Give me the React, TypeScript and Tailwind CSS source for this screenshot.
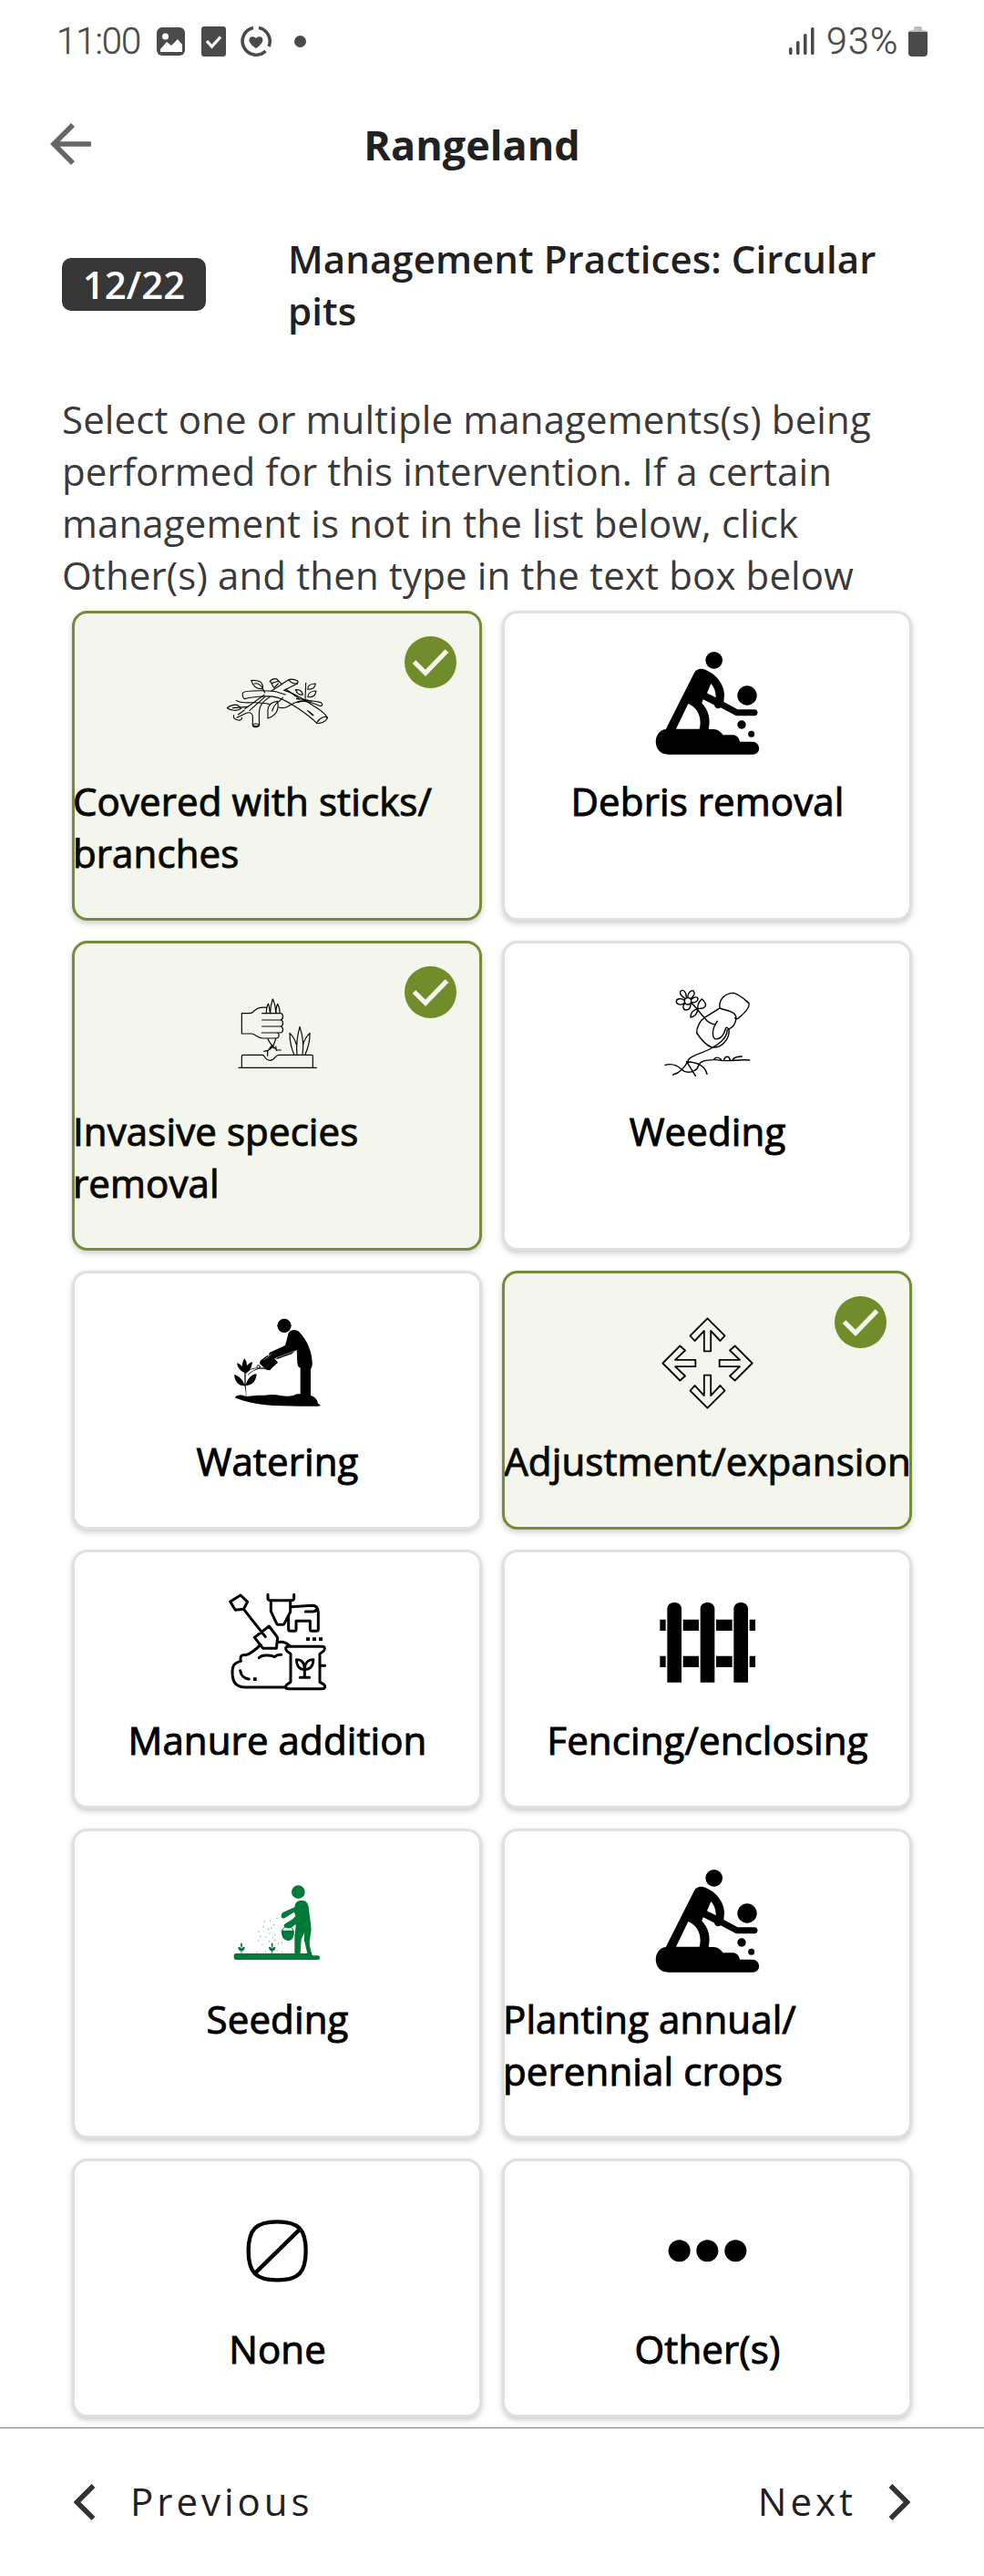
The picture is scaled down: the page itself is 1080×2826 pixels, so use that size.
import React from "react";

const Frame = ({ children, fill = "none", vb = "0 0 480 390" }: { children: React.ReactNode; fill?: string; vb?: string }) => (
  <svg className="h-[130px] w-[160px] shrink-0" viewBox={vb} fill={fill} strokeLinecap="round" strokeLinejoin="round">{children}</svg>
);

const Branches = () => (
  <Frame vb="462 135 480 390">
    <g stroke="#080a02" strokeWidth="3.4">
      <path d="M590 300c6-8 100-10 120 0M590 300c-3 6 0 18 5 20 14-4 76-14 110-4 34 10 102 58 128 84M710 300l20 6" />
      <path d="M596 353l64-46M612 358l50-44M684 294l56-37c10-4 22 0 31 5l-2 8-44 22c40 10 70 34 99 52 18 12 38 22 44 40" />
      <path d="M741 257c4 9 18 15 29 12M678 264c4-9 20-13 25-8M682 264l8 17M684 270c6-6 14-6 24-8M692 284l14-14M704 258l14 14M734 290l42 30" />
      <path d="M868 383c0-8-24-4-34 14-4 8 28 2 34-14zM803 359l16 15M808 362l14 12" />
      <path d="M617 260c8-2 30 0 34 8 6 8 4 14 4 18-18 4-30-4-38-26zM628 270c8-2 18 2 26 14l8 16" />
      <path d="M538 350c8-8 28-14 36-8l10 10c-14 10-34 6-46-2zM556 350l50-4" />
      <path d="M568 325c20 16 64 0 108 12M574 372l20-14M560 374c-4 8 4 14 14 16 8 2 14-4 12-8M570 382l28-14c12-6 22-2 24 8v30c0 10 20 10 22-2-2-38-4-60 18-78l16-12" />
      <ellipse cx="633" cy="406" rx="11" ry="4" />
      <path d="M704 328c-20 2-30 14-32 26v30c24-8 38-26 32-56zM686 360c4-12 10-22 18-28s12-10 17-16" />
      <path d="M708 348c24 8 36-10 54-16 24-10 62-6 84 0 8 4 6 10 0 12-22-10-54-22-76-12" />
      <path d="M763 290c10 0 20 0 24 16-12 2-18-2-24-16zM797 268l-2 52M803 288c0-12 10-18 26-18-2 14-10 20-26 18zM804 314c0-12 10-20 27-20-2 16-12 22-27 20zM766 320c20 2 40 2 48 8" />
    </g>
  </Frame>
);

const Digger = () => (
  <Frame vb="468 135 480 390" fill="#000">
    <circle cx="731" cy="193" r="28" />
    <circle cx="840" cy="309" r="32" />
    <circle cx="822" cy="405" r="14" />
    <circle cx="854" cy="436" r="10.5" />
    <path fillRule="evenodd" d="M572 421L665 236c6-12 18-16 30-14 42 12 70 52 70 84l-2 24 46 25h55c14 0 14 21 0 21h-60l-51-27c-10 6-18 2-22-9l-36-18-4 12c20 22 30 48 22 86h19c14 2 22 10 29 19h30c14 0 22 8 25 22h44c26 4 26 42-1 42H580c-54 0-52-78-8-83zM606 419h77c10-38-8-72-37-83zM708 301l29 15c0-18-4-32-16-46z" />
  </Frame>
);

const Invasive = () => (
  <Frame vb="462 141 480 390">
    <g stroke="#080a02" strokeWidth="3.6">
      <path d="M668 256c-30-2-32 4-42 12-4 5-8 7-16 7h-24v67h31c14 0 20 15 38 15h44c10 0 14-16 2-18h-49M653 275h61c10 2 10 20 0 22h-61M714 297c10 2 10 19 0 21h-61M714 318c10 2 10 19 0 21h-13" />
      <path d="M667 275c0-12 2-24 6-31 4 6 5 16 6 30M680 275c0-20 4-36 8-47 6 12 10 26 10 47M699 274c0-12 2-24 5-30 5 10 8 20 7 30" />
      <path d="M672 359c6 16 18 26 29 37M698 359c-6 16-6 28-26 38l-13 3M684 382l-13 18v15M690 378v12M698 384l2 13M700 396h15" />
      <path d="M576 454h256M586 454v-38c0-2 1-4 4-4h64c8 0 8 18 25 18s17-18 29-18h108c3 0 4 2 4 4v38" />
      <path d="M768 411c-4-36 2-66 9-92 9 26 14 56 9 92M758 410c-10-22-14-44-14-70 10 10 18 22 22 38M795 410c10-22 16-44 15-70-10 10-18 22-22 38" />
    </g>
  </Frame>
);

const Weeding = () => (
  <Frame vb="468 141 480 390">
    <g stroke="#000" strokeWidth="4.2">
      <circle cx="645" cy="235" r="11" />
      <path d="M634 232c-10-8-26-6-27 3-1 10 16 16 27 6M636 226c-14-8-20-18-14-25 8-6 18 4 18 21M645 222c-2-14 12-26 19-20 6 8-2 20-10 24M656 230c10-12 22-10 22-2 0 8-12 14-22 10M634 244c-8 8-4 20 4 20 12 0 16-10 16-19" />
      <path d="M656 241c20 16 28 34 43 48M678 260c-2-12 4-24 13-32 20 18 16 32-13 32zM678 260c-16 4-24 16-24 28 14-2 22-14 24-28z" />
      <path d="M750 258c-4-30 18-50 46-50 22 6 38 24 50 34 4 16-26 42-36 50-4 2-8 0-10-2M750 258c26 10 54 10 54 34-2 14-10 28-22 34M748 259l-48 30c-14 8-26 32-26 50 14 22 28 40 50 48 30 4 60-26 56-60M700 290c8 14 20 18 36 23M742 301c-14 16-18 40-12 54 6 10 24 2 30-8 8-12 8-20 10-24 4-4 6 0 10 8M774 330c2 28-36 52-52 60-26 16-64 22-74 36-10 22-24 44-52 51" />
      <path d="M570 445c30-8 46 6 56 16 14 14 48 8 54-14 8-22 36-16 56-20 36 10 76-2 112 2M641 434l29 47M643 435c30 0 58 12 65 40M730 427c6-10 16-8 24 0M764 428c4-14 18-14 20 2M793 427c6-10 20-10 30-10" />
    </g>
  </Frame>
);

const Watering = () => (
  <Frame vb="462 132 480 390" fill="#000">
    <circle cx="726" cy="208" r="23" />
    <path d="M738 240c2-20 28-24 40-8 26 28 42 70 40 106-2 6-2 10-5 12v88c14 4 22 14 24 26 12 6 10 9-2 9-90 0-200 4-272-28 8-12 24-8 34-5h2c2-14-2-26-4-34-22 0-32-16-34-37 20 6 30 20 34 34v-40c-14-6-22-16-25-32 8 2 14 6 17 12 0-12 4-20 8-27 6 8 8 14 8 24 6-8 10-10 18-13-2 18-8 32-22 36v40c6-20 20-36 36-36-2 24-14 38-36 38 2 16 2 26 2 36 28-5 54-2 80-6 32-2 56 14 86-2h12v-86c-12-4-10-18-12-60l-16 14-50 18-8-6 2 4 10 12-28 26-10-2-22-20 2-10 22-16h6l2-10 52-24z" />
    <path d="M600 365c12-16 26-22 80-14M606 370c14-14 40-30 74-18" fill="none" stroke="#000" strokeWidth="2.5" />
    <circle cx="641" cy="343" r="5" fill="#fff" stroke="#000" strokeWidth="3" />
    <path d="M660 320l24-18M700 314l62-23M700 314l8 15" stroke="#fff" strokeWidth="1.5" />
  </Frame>
);

const arrow = "M709.500 184l57 57-15 17-31-33v67h-22v-67l-31 33-15-17z";
const Expand = () => (
  <Frame vb="468 132 480 390">
    <g stroke="#080a02" strokeWidth="5.5">
      <path d={arrow} />
      <path d={arrow} transform="rotate(90 709.5 331.5)" />
      <path d={arrow} transform="rotate(180 709.5 331.5)" />
      <path d={arrow} transform="rotate(270 709.5 331.5)" />
    </g>
  </Frame>
);

const Manure = () => (
  <Frame>
    <g stroke="#000" strokeWidth="9">
      <path d="M86 66l34-21 23 22-13 24-27 3zM131 92l71 90M166 184l48-37 28 37-4 36h-44z" />
      <path d="M210 43v12q0 7 7 7h72q7 0 7-7V43M220 64v34l19 41q1 3 4 3h17q3 0 4-3l20-39V64M288 83l68-4q20 0 20 24v54q0 6-5 6h-17q-5 0-5-6v-27h-46v27q0 6-5 6h-15q-5 0-5-6v-46M334 99h22q14 0 16-10" />
      <path d="M186 208c-14 14-30 28-48 34-16-2-20 4-17 20-22 6-28 14-28 38 0 30 12 48 42 48h134M242 200c18-4 28 0 40 12" />
      <path d="M181 251c8-8 16-9 25-8 10-1 18 0 26 5 8-8 14-8 22-7M119 293c2 16 14 27 29 28" />
      <path d="M277 214h112c10 0 10 10 4 15l-12 9v93l12 7c8 6 6 15-4 15H277c-10 0-10-9-4-14l12-8v-93l-12-9c-6-6-6-15 4-15zM383 277h15M316 316h31M331 316v-28" />
      <path d="M331 290c-18 0-26-12-27-33 18 0 27 12 27 33 0-20 10-33 29-33-1 21-11 33-29 33z" strokeWidth="8" />
    </g>
    <path d="M162 316h11v11h-11zM336 184h12v11h-12zM357 184h12v11h-12zM378 184h12v11h-12z" fill="#000" />
  </Frame>
);

const Fence = () => (
  <Frame fill="#000">
    {[109, 218, 328].map((x) => <path key={x} d={`M${x} 332V90c0-28 47-28 47 0v242z`} />)}
    {[125, 245].map((y) => <path key={y} d={`M85 ${y}h19v37H85zM161 ${y}h52v37h-52zM270 ${y}h53v37h-53zM380 ${y}h19v37h-19z`} />)}
  </Frame>
);

const Seeding = () => (
  <Frame fill="#007a38">
    <circle cx="310" cy="104" r="22" />
    <path d="M98 313q0-7 7-7h193v-50c0-16 4-28 4-46l-16 12c-10 4-28-2-22-12l26-16 11-10-4-14-32 20c-14 4-14-14-4-20l37-16c2-14 6-22 24-22 14 0 20 8 22 22l7 52 2 22-6 40c0 18 6 34 10 45h16q8 0 8 7t-8 7H105q-7 0-7-7z" />
    <path d="M317 306l3-46 10-22v26l10 42z" fill="#fff" />
    <path d="M254 230h42c2 18-4 32-18 34-16 0-24-14-24-34z" />
    <path d="M257 230c6-18 32-18 36 0M123 304v-14M224 304v-14" fill="none" stroke="#007a38" strokeWidth="3" />
    {[123, 224].map((x) => <path key={x} transform={`translate(${x} 0)`} d="M0 270q6 8 0 18-6-10 0-18zM-11 284q10 0 11 8 1-8 11-8 0 14-11 14t-11-14z" />)}
    {[[200, 201], [218, 198], [240, 190], [195, 218], [212, 226], [229, 212], [180, 234], [216, 240], [232, 246], [179, 264], [192, 276], [204, 252], [214, 266], [234, 262], [226, 254], [244, 274], [184, 250], [256, 270], [174, 302], [256, 302], [240, 296], [202, 300], [221, 222]].map(([x, y]) => <circle key={`${x}-${y}`} cx={x} cy={y} r="1.6" />)}
  </Frame>
);

const NoneIcon = () => (
  <Frame>
    <path d="M241 103c70 0 94 25 94 96s-24 96-94 96-95-25-95-96 25-96 95-96zM169 271L316 127" stroke="#000" strokeWidth="13" />
  </Frame>
);

const Dots = () => (
  <Frame fill="#000">
    <circle cx="149" cy="199" r="36" /><circle cx="241" cy="199" r="36" /><circle cx="334" cy="199" r="36" />
  </Frame>
);

type Option = { label: React.ReactNode; icon: React.ReactNode; tall?: boolean; on?: boolean; multi?: boolean };

const options: Option[] = [
  { label: <>Covered with sticks/<br />branches</>, icon: <Branches />, tall: true, on: true, multi: true },
  { label: "Debris removal", icon: <Digger />, tall: true },
  { label: <>Invasive species<br />removal</>, icon: <Invasive />, tall: true, on: true, multi: true },
  { label: "Weeding", icon: <Weeding />, tall: true },
  { label: "Watering", icon: <Watering /> },
  { label: "Adjustment/expansion", icon: <Expand />, on: true },
  { label: "Manure addition", icon: <Manure /> },
  { label: "Fencing/enclosing", icon: <Fence /> },
  { label: "Seeding", icon: <Seeding />, tall: true },
  { label: <>Planting annual/<br />perennial crops</>, icon: <Digger />, tall: true, multi: true },
  { label: "None", icon: <NoneIcon /> },
  { label: "Other(s)", icon: <Dots /> },
];

const Card = ({ label, icon, tall, on, multi }: Option) => (
  <button
    type="button"
    aria-pressed={!!on}
    className={`relative flex w-[450px] flex-col items-center overflow-hidden rounded-[17px] border-[3px] pt-8 shadow-[0_3px_6px_rgba(0,0,0,0.2)] ${tall ? "h-[340px]" : "h-[284px]"} ${on ? "border-[#748b37] bg-[#f4f5ec]" : "border-[#e0e0e0] bg-white"}`}
  >
    {icon}
    <span className={`mt-[15px] -mx-[3px] block w-[450px] pl-px text-[42px] leading-[57px] tracking-[0.12px] whitespace-nowrap [-webkit-text-stroke:1px_currentColor] ${on ? "text-[#080a02]" : "text-black"} ${multi ? "text-left" : "text-center"}`}>{label}</span>
    {on && (
      <svg className="absolute top-[25px] right-[25px] size-[57px]" viewBox="0 0 57 57">
        <circle cx="28.5" cy="28.5" r="28.5" fill="#718c2b" />
        <path d="M10.5 28L23 40.3L46.5 16" fill="none" stroke="#f4f5ec" strokeWidth="5.2" />
      </svg>
    )}
  </button>
);

export default function App() {
  return (
    <div className="flex h-[2826px] w-[1080px] flex-col overflow-hidden bg-white font-['Open_Sans',sans-serif] text-[42px] leading-[57px] text-[#212121]">
      <div className="flex h-[90px] shrink-0 items-center pl-[62px] pr-[62px] font-['Roboto',sans-serif] text-[40px] leading-none font-light text-[#4a4a4a]">
        <span className="w-[110px] pt-px tracking-[-1px] [-webkit-text-stroke:0.4px_currentColor]">11:00</span>
        <svg className="size-[31px]" viewBox="0 0 31 31">
          <rect width="31" height="31" rx="6" fill="#4a4a4a" />
          <circle cx="9.5" cy="10" r="3.5" fill="#fff" />
          <path d="M4 27v-3l7-8 5 4 7-7 5 6v8z" fill="#fff" />
        </svg>
        <svg className="ml-[18px] h-[33px] w-[27px]" viewBox="0 0 27 33">
          <rect width="27" height="33" rx="3" fill="#4a4a4a" />
          <path d="M6 16l5.5 6L21 11.500" fill="none" stroke="#fff" strokeWidth="3.2" />
        </svg>
        <svg className="ml-[16px] size-[34px]" viewBox="0 0 34 34" fill="none">
          <path d="M20 2.500A15 15 0 0 1 31 23M27.500 28A15 15 0 1 1 14 2.500" stroke="#4a4a4a" strokeWidth="3.600" />
          <path d="M17 25c-14-9-5-16 0-11 5-5 14 2 0 11z" fill="#4a4a4a" />
        </svg>
        <span className="ml-[25px] size-[13px] rounded-full bg-[#4a4a4a]" />
        <svg className="ml-auto h-[30px] w-[29px]" viewBox="0 0 29 30" fill="#4a4a4a">
          <rect x="0" y="22" width="3.500" height="8" rx="1.500" /><rect x="8" y="15" width="3.500" height="15" rx="1.500" /><rect x="16" y="7" width="3.500" height="23" rx="1.500" /><rect x="24" y="0" width="3.500" height="30" rx="1.500" />
        </svg>
        <span className="ml-[12px] w-[86px] pt-px text-[41px] tracking-[1.2px] whitespace-nowrap [-webkit-text-stroke:0.4px_currentColor]">93%</span>
        <svg className="ml-[4px] h-[33px] w-[21px]" viewBox="0 0 21 33">
          <path d="M0 8q0-4 4-4h2V2q0-2 2-2h5q2 0 2 2v2h2q4 0 4 4z" fill="#bdbdbd" />
          <path d="M0 6h21v23q0 4-4 4H4q-4 0-4-4z" fill="#4a4a4a" />
        </svg>
      </div>

      <header className="grid h-[136px] shrink-0 grid-cols-[200px_1fr_244px] items-center">
        <svg className="ml-[55px] size-[46px]" viewBox="0 0 46 46" fill="none" stroke="#666" strokeWidth="5.600">
          <path d="M45 23H5M25 2L4 23l21 21" />
        </svg>
        <h1 className="text-center text-[45px] font-bold">Rangeland</h1>
      </header>

      <div className="flex h-[171px] shrink-0 items-center pl-[68px]">
        <div className="flex h-[58px] w-[158px] items-center justify-center rounded-[10px] bg-[#373737] pb-px font-semibold text-white">12/22</div>
        <h2 className="ml-[90px] w-[680px] font-semibold tracking-[0.06px]">Management Practices: Circular<br />pits</h2>
      </div>

      <p className="mt-[34px] pl-[68px] tracking-[0.13px] whitespace-nowrap text-[#3a3a3a]">
        Select one or multiple managements(s) being<br />performed for this intervention. If a certain<br />management is not in the list below, click<br />Other(s) and then type in the text box below
      </p>

      <div className="mt-[11px] ml-[79px] grid w-[922px] shrink-0 grid-cols-2 gap-[22px]">
        {options.map((o, i) => <Card key={i} {...o} />)}
      </div>

      <footer className="mt-[11px] flex h-[163px] shrink-0 items-center justify-between border-t border-[#7e8756] px-[81px] tracking-[4px]">
        <button type="button" className="flex items-center gap-[38px]">
          <svg className="h-[40px] w-[24px]" viewBox="0 0 24 40" fill="none" stroke="#333" strokeWidth="5.500"><path d="M21.500 2L3.500 20l18 18" /></svg>
          <span className="pb-[3px]">Previous</span>
        </button>
        <button type="button" className="flex items-center gap-[35px]">
          <span className="pb-[3px]">Next</span>
          <svg className="h-[40px] w-[24px]" viewBox="0 0 24 40" fill="none" stroke="#333" strokeWidth="5.500"><path d="M2.500 2l18 18-18 18" /></svg>
        </button>
      </footer>
    </div>
  );
}
